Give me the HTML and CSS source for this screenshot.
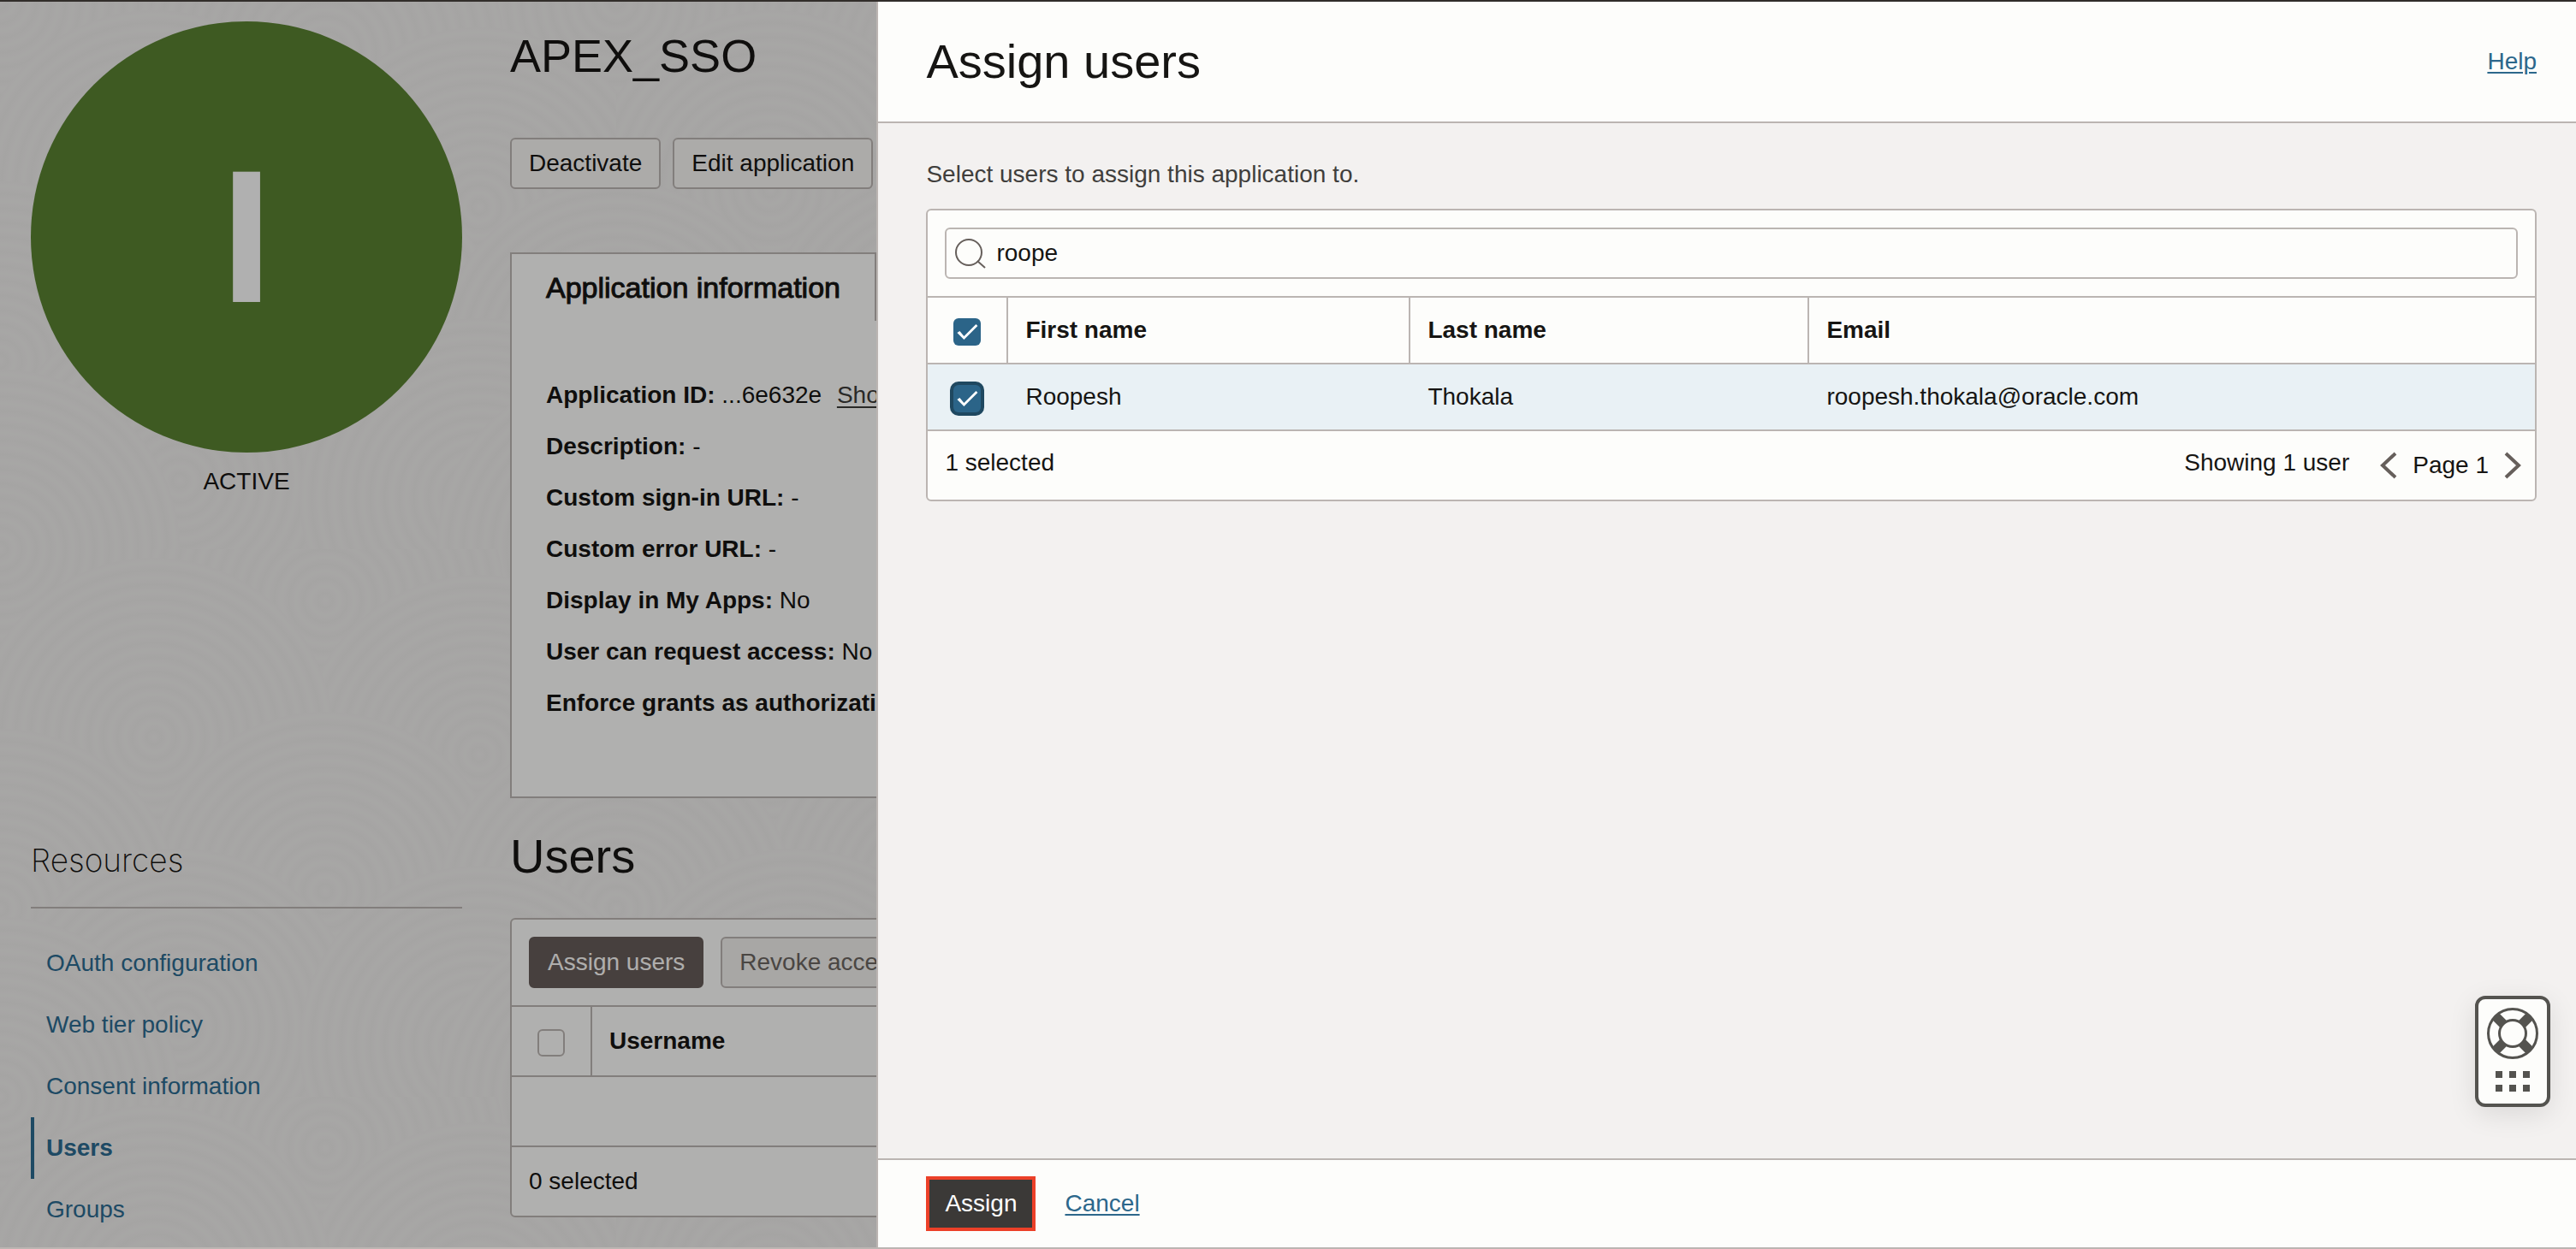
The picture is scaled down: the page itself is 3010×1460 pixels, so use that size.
FILE: index.html
```html
<!DOCTYPE html>
<html lang="en">
<head>
<meta charset="utf-8">
<title>Assign users</title>
<meta name="viewport" content="width=device-width, initial-scale=1">
<link rel="stylesheet" href="styles.css">
</head>
<body>
<div class="console">
  <svg class="texture" aria-hidden="true">
    <defs>
      <radialGradient id="rings" gradientUnits="userSpaceOnUse" cx="0" cy="0" r="17" spreadMethod="repeat">
        <stop offset="0" stop-color="#f0efed"/>
        <stop offset=".5" stop-color="#edebea"/>
        <stop offset="1" stop-color="#f0efed"/>
      </radialGradient>
      <circle id="disc" r="210" fill="url(#rings)"/>
      <pattern id="swirls" width="720" height="640" patternUnits="userSpaceOnUse">
        <rect width="720" height="640" fill="#efeeec"/>
        <use href="#disc" x="0" y="0"/>
        <use href="#disc" x="720" y="0"/>
        <use href="#disc" x="380" y="60"/>
        <use href="#disc" x="560" y="240"/>
        <use href="#disc" x="180" y="220"/>
        <use href="#disc" x="380" y="400"/>
        <use href="#disc" x="0" y="420"/>
        <use href="#disc" x="720" y="420"/>
        <use href="#disc" x="210" y="560"/>
        <use href="#disc" x="560" y="580"/>
        <use href="#disc" x="0" y="640"/>
        <use href="#disc" x="720" y="640"/>
      </pattern>
    </defs>
    <rect width="100%" height="100%" fill="url(#swirls)"/>
  </svg>

  <aside class="sidebar">
    <div class="avatar">I</div>
    <p class="status">ACTIVE</p>
    <h2 class="resources-title">Resources</h2>
    <nav class="resources">
      <a href="#oauth">OAuth configuration</a>
      <a href="#policy">Web tier policy</a>
      <a href="#consent">Consent information</a>
      <a href="#users" class="current" aria-current="page">Users</a>
      <a href="#groups">Groups</a>
    </nav>
  </aside>

  <main class="main">
    <h1 class="app-name">APEX_SSO</h1>
    <div class="actions">
      <button class="btn" type="button">Deactivate</button>
      <button class="btn" type="button">Edit application</button>
    </div>

    <section class="info">
      <div class="tab">Application information</div>
      <dl class="facts">
        <div><dt>Application ID:</dt> <dd>...6e632e <a class="show" href="#show">Show</a></dd></div>
        <div><dt>Description:</dt> <dd>-</dd></div>
        <div><dt>Custom sign-in URL:</dt> <dd>-</dd></div>
        <div><dt>Custom error URL:</dt> <dd>-</dd></div>
        <div><dt>Display in My Apps:</dt> <dd>No</dd></div>
        <div><dt>User can request access:</dt> <dd>No</dd></div>
        <div><dt>Enforce grants as authorization:</dt></div>
      </dl>
    </section>

    <h2 class="section-title">Users</h2>
    <section class="card">
      <div class="toolbar">
        <button class="btn btn-primary" type="button">Assign users</button>
        <button class="btn btn-disabled" type="button" disabled>Revoke access</button>
      </div>
      <table class="grid grid-page">
        <thead>
          <tr>
            <th class="pick"><input class="check" type="checkbox" aria-label="Select all assigned users"></th>
            <th>Username</th>
          </tr>
        </thead>
        <tbody>
          <tr><td colspan="2"></td></tr>
        </tbody>
      </table>
      <div class="card-footer"><span>0 selected</span></div>
    </section>
  </main>
</div>

<div class="backdrop"></div>

<section class="drawer" role="dialog" aria-labelledby="drawer-title">
  <header class="drawer-header">
    <h2 class="drawer-title" id="drawer-title">Assign users</h2>
    <a class="link" href="#help">Help</a>
  </header>

  <div class="drawer-body">
    <p class="hint">Select users to assign this application to.</p>
    <div class="card">
      <div class="toolbar">
        <label class="search">
          <svg width="36" height="36" viewBox="0 0 36 36" fill="none" stroke="#665f5b" stroke-width="2" aria-hidden="true">
            <circle cx="16" cy="17" r="15"/>
            <path d="M26 27l9 8"/>
          </svg>
          <input type="text" value="roope" aria-label="Search users">
        </label>
      </div>
      <table class="grid grid-drawer">
        <colgroup><col class="col-pick"><col class="col-first"><col class="col-last"><col></colgroup>
        <thead>
          <tr>
            <th class="pick"><input class="check" type="checkbox" checked aria-label="Select all users"></th>
            <th>First name</th>
            <th>Last name</th>
            <th>Email</th>
          </tr>
        </thead>
        <tbody>
          <tr class="selected">
            <td class="pick"><input class="check check-focus" type="checkbox" checked aria-label="Select Roopesh Thokala"></td>
            <td>Roopesh</td>
            <td>Thokala</td>
            <td>roopesh.thokala@oracle.com</td>
          </tr>
        </tbody>
      </table>
      <div class="card-footer">
        <span class="count">1 selected</span>
        <span class="count showing">Showing 1 user</span>
        <div class="pager">
          <button class="page-btn" type="button" aria-label="Previous page">
            <svg width="20" height="34" viewBox="0 0 20 34" fill="none" stroke="#665f5b" stroke-width="4"><path d="M18 3L3 17l15 14"/></svg>
          </button>
          <span>Page 1</span>
          <button class="page-btn" type="button" aria-label="Next page">
            <svg width="20" height="34" viewBox="0 0 20 34" fill="none" stroke="#665f5b" stroke-width="4"><path d="M2 3l15 14L2 31"/></svg>
          </button>
        </div>
      </div>
    </div>
  </div>

  <footer class="drawer-footer">
    <button class="assign" type="button">Assign</button>
    <a class="link" href="#cancel">Cancel</a>
  </footer>
</section>

<button class="support" type="button" aria-label="Support">
  <svg width="80" height="122" viewBox="0 0 80 122" aria-hidden="true">
    <g fill="none" stroke="#54534f">
      <circle cx="40" cy="40" r="28.5" stroke-width="3"/>
      <circle cx="40" cy="40" r="15.5" stroke-width="3"/>
      <path d="M51 29l9-9M51 51l9 9M29 51l-9 9M29 29l-9-9" stroke-width="11"/>
    </g>
    <path fill="#54534f" d="M20 84h8v8h-8zM36 84h8v8h-8zM52 84h8v8h-8zM20 100h8v8h-8zM36 100h8v8h-8zM52 100h8v8h-8z"/>
  </svg>
</button>
</body>
</html>
```
FILE: styles.css
```css
* {
  box-sizing: border-box;
}

body {
  position: relative;
  height: 100vh;
  margin: 0;
  overflow: hidden;
  border-top: 2px solid #312d2a;
  border-bottom: 2px solid #bbb5b2;
  font: 28px/40px "Liberation Sans", Arial, sans-serif;
  color: #161513;
}

h1, h2, p, dl, dd {
  margin: 0;
}

button, input {
  font: inherit;
  color: inherit;
}

/* Page behind the drawer */

.console {
  position: relative;
  display: flex;
  gap: 56px;
  height: 100%;
  padding: 0 36px;
  overflow: hidden;
}

.texture {
  position: absolute;
  inset: 0;
  width: 100%;
  height: 100%;
}

.sidebar {
  position: relative;
  flex: none;
  width: 504px;
  padding-top: 23px;
}

.avatar {
  display: flex;
  align-items: center;
  justify-content: center;
  height: 504px;
  border-radius: 50%;
  background: #598132;
  color: #fdfdfd;
  font-size: 220px;
  font-weight: bold;
}

.status {
  margin-top: 14px;
  text-align: center;
}

.resources-title {
  margin-top: 393px;
  padding-bottom: 24px;
  border-bottom: 2px solid #bbb5b2;
  font-family: Inter, "Liberation Sans", sans-serif;
  font-size: 37px;
  font-weight: 200;
  line-height: 60px;
}

.resources {
  display: flex;
  flex-direction: column;
  margin-top: 28px;
}

.resources a {
  padding-left: 14px;
  border-left: 4px solid transparent;
  line-height: 72px;
  color: #2b6a90;
  text-decoration: none;
}

.resources .current {
  border-left-color: #2b6a90;
  font-weight: bold;
}

.main {
  position: relative;
  flex: 1;
  padding-top: 27px;
}

.app-name {
  font-size: 54px;
  font-weight: normal;
  line-height: 72px;
}

.actions {
  display: flex;
  gap: 14px;
  margin-top: 60px;
}

.btn {
  height: 60px;
  padding: 0 20px;
  border: 2px solid #bbb5b2;
  border-radius: 6px;
  background: #f6f5f3;
}

.btn-primary {
  border-color: #665c59;
  background: #665c59;
  color: #fbf9f8;
}

.btn-disabled {
  background: #f1efed;
  color: #6b6561;
}

.info {
  margin-top: 74px;
  border: 2px solid #bbb5b2;
  background: #fdfdfb;
}

.tab {
  width: 426px;
  padding-left: 40px;
  border-right: 2px solid #bbb5b2;
  font-size: 34px;
  line-height: 78px;
  -webkit-text-stroke: 1px #161513;
}

.facts {
  padding: 57px 40px 79px;
  line-height: 60px;
}

.facts dt, .facts dd {
  display: inline;
}

.facts dt {
  font-weight: bold;
}

.show {
  margin-left: 10px;
  color: #3c3b39;
  text-underline-offset: 4px;
}

.section-title {
  margin: 32px 0 36px;
  font-size: 56px;
  font-weight: normal;
  line-height: 72px;
}

/* Table card */

.card {
  border: 2px solid #bbb5b2;
  border-radius: 6px;
  background: #fdfdfb;
}

.toolbar {
  display: flex;
  gap: 20px;
  padding: 20px;
  border-bottom: 2px solid #bbb5b2;
}

.grid {
  width: 100%;
  border-spacing: 0;
  table-layout: fixed;
}

.grid th, .grid td {
  height: 78px;
  padding: 0 20px;
  border-bottom: 2px solid #bbb5b2;
  text-align: left;
}

.grid-page th, .grid-page td {
  height: 82px;
}

.grid th {
  border-right: 2px solid #bbb5b2;
}

.grid th:last-child {
  border-right: 0;
}

.grid .pick {
  width: 94px;
  padding: 4px 0 0 30px;
}

.col-pick {
  width: 94px;
}

.col-first {
  width: 470px;
}

.col-last {
  width: 466px;
}

.selected {
  background: #e9f1f5;
}

.check {
  appearance: none;
  display: block;
  width: 32px;
  height: 32px;
  margin: 0;
  border: 2px solid #bbb5b2;
  border-radius: 6px;
}

.check:checked {
  border: 0;
  background: #2b6488;
}

.check:checked::after {
  content: "";
  display: block;
  width: 32px;
  height: 32px;
  background: #fff;
  clip-path: polygon(4px 17px, 7px 15px, 12px 21px, 26px 7px, 28px 9px, 12px 25px);
}

.check-focus {
  box-shadow: 0 0 0 4px #1f4860;
}

.card-footer {
  display: flex;
  align-items: center;
  height: 80px;
  padding: 0 20px;
}

/* Drawer */

.backdrop {
  position: absolute;
  inset: 0;
  background: rgba(0, 0, 0, 0.3);
}

.drawer {
  position: absolute;
  top: 0;
  right: 0;
  bottom: 0;
  display: flex;
  flex-direction: column;
  width: calc(66% - 1px);
  border-left: 2px solid #bbb5b2;
  background: #f3f1f0;
}

.drawer-header {
  display: flex;
  align-items: center;
  justify-content: space-between;
  height: 142px;
  padding: 0 46px 0 56px;
  border-bottom: 2px solid #bbb5b2;
  background: #fdfdfb;
}

.drawer-title {
  font-size: 56px;
  font-weight: normal;
  line-height: 72px;
}

.link {
  color: #2c678b;
  text-underline-offset: 3px;
  text-decoration-thickness: 2px;
}

.drawer-body {
  flex: 1;
  padding: 40px 46px 0 56px;
}

.hint {
  margin-bottom: 20px;
  color: #403e3c;
}

.search {
  display: flex;
  flex: 1;
  align-items: center;
  gap: 12px;
  height: 60px;
  padding: 0 10px;
  border: 2px solid #bbb5b2;
  border-radius: 6px;
}

.search input {
  flex: 1;
  min-width: 0;
  padding: 0;
  border: 0;
  outline: 0;
  background: none;
}

.drawer .card-footer {
  padding-right: 16px;
}

.count {
  padding-bottom: 6px;
}

.showing {
  margin-left: auto;
}

.pager {
  display: flex;
  align-items: center;
  gap: 18px;
  margin-left: 36px;
}

.page-btn {
  display: flex;
  padding: 0;
  border: 0;
  background: none;
}

.drawer-footer {
  display: flex;
  align-items: center;
  gap: 34px;
  height: 104px;
  padding: 0 56px;
  border-top: 2px solid #bbb5b2;
  background: #fdfdfb;
}

.assign {
  height: 64px;
  padding: 0 18px;
  border: 4px solid #ec4028;
  background: #3b3937;
  color: #fff;
}

.support {
  position: absolute;
  right: 30px;
  bottom: 164px;
  width: 88px;
  height: 130px;
  padding: 0;
  border: 4px solid #54534f;
  border-radius: 12px;
  background: #fdfdfb;
  box-shadow: 0 8px 32px rgba(0, 0, 0, 0.1);
}

.support svg {
  display: block;
}
```
